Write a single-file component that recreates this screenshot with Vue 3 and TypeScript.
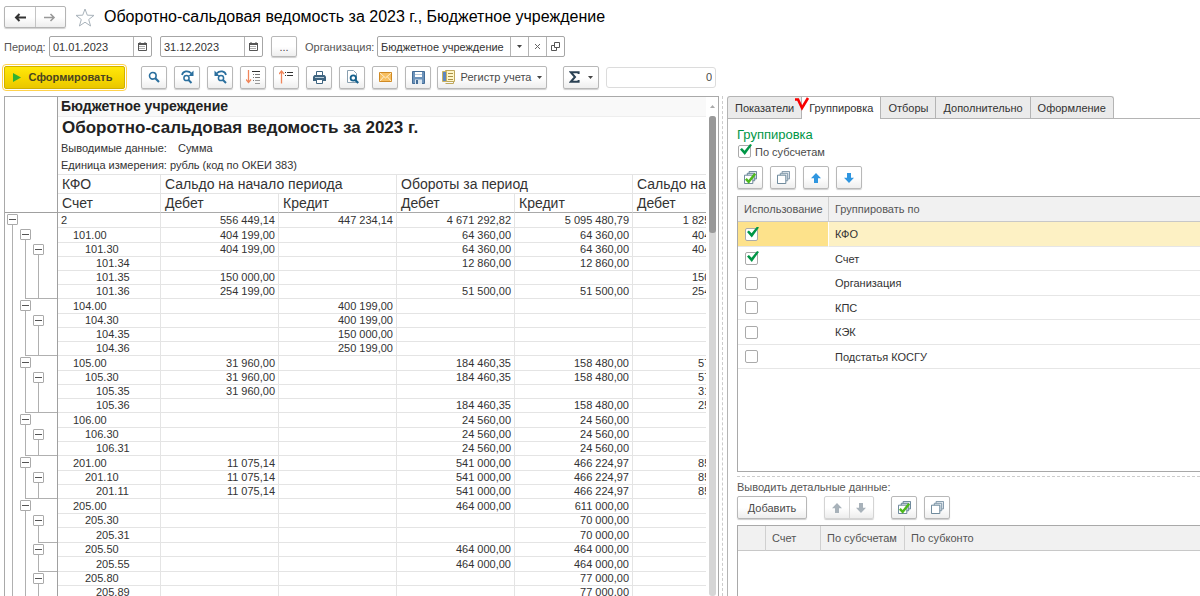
<script setup lang="ts">
import { computed, ref } from 'vue'

interface Account {
  code: string
  level: number
  cells: string[]
}

interface Grouping {
  name: string
  used: boolean
}

const account = (level: number, code: string, ...cells: string[]): Account => ({ code, level, cells })

const accounts: Account[] = [
  account(0, '2', '556 449,14', '447 234,14', '4 671 292,82', '5 095 480,79', '1 825 302,12'),
  account(1, '101.00', '404 199,00', '', '64 360,00', '64 360,00', '404 199,00'),
  account(2, '101.30', '404 199,00', '', '64 360,00', '64 360,00', '404 199,00'),
  account(3, '101.34', '', '', '12 860,00', '12 860,00', ''),
  account(3, '101.35', '150 000,00', '', '', '', '150 000,00'),
  account(3, '101.36', '254 199,00', '', '51 500,00', '51 500,00', '254 199,00'),
  account(1, '104.00', '', '400 199,00', '', '', ''),
  account(2, '104.30', '', '400 199,00', '', '', ''),
  account(3, '104.35', '', '150 000,00', '', '', ''),
  account(3, '104.36', '', '250 199,00', '', '', ''),
  account(1, '105.00', '31 960,00', '', '184 460,35', '158 480,00', '57 940,35'),
  account(2, '105.30', '31 960,00', '', '184 460,35', '158 480,00', '57 940,35'),
  account(3, '105.35', '31 960,00', '', '', '', '31 960,00'),
  account(3, '105.36', '', '', '184 460,35', '158 480,00', '25 980,35'),
  account(1, '106.00', '', '', '24 560,00', '24 560,00', ''),
  account(2, '106.30', '', '', '24 560,00', '24 560,00', ''),
  account(3, '106.31', '', '', '24 560,00', '24 560,00', ''),
  account(1, '201.00', '11 075,14', '', '541 000,00', '466 224,97', '85 850,17'),
  account(2, '201.10', '11 075,14', '', '541 000,00', '466 224,97', '85 850,17'),
  account(3, '201.11', '11 075,14', '', '541 000,00', '466 224,97', '85 850,17'),
  account(1, '205.00', '', '', '464 000,00', '611 000,00', ''),
  account(2, '205.30', '', '', '', '70 000,00', ''),
  account(3, '205.31', '', '', '', '70 000,00', ''),
  account(2, '205.50', '', '', '464 000,00', '464 000,00', ''),
  account(3, '205.55', '', '', '464 000,00', '464 000,00', ''),
  account(2, '205.80', '', '', '', '77 000,00', ''),
  account(3, '205.89', '', '', '', '77 000,00', ''),
]

// Tree lanes of one row: a box where a group opens, a line while it runs, a corner where it ends.
const rows = computed(() =>
  accounts.map((row, index) => {
    const next = accounts[index + 1]
    const lanes = [0, 1, 2].map((lane) => ({
      box: row.level === lane,
      line: row.level > lane,
      corner: row.level > lane && next !== undefined && next.level <= lane,
    }))
    const tall = row.level < 2 || (row.level === 3 && next?.level === 2)
    return { ...row, lanes, tall }
  }),
)

const tabs = ['Показатели', 'Группировка', 'Отборы', 'Дополнительно', 'Оформление']
const activeTab = ref('Группировка')

const bySubaccounts = ref(true)
const groupings = ref<Grouping[]>([
  { name: 'КФО', used: true },
  { name: 'Счет', used: true },
  { name: 'Организация', used: false },
  { name: 'КПС', used: false },
  { name: 'КЭК', used: false },
  { name: 'Подстатья КОСГУ', used: false },
])
const selected = ref('КФО')

const dateFrom = ref('01.01.2023')
const dateTo = ref('31.12.2023')
const organization = ref('Бюджетное учреждение')
const total = ref('0')

function setAll(used: boolean) {
  groupings.value.forEach((g) => (g.used = used))
}
</script>

<template>
  <div class="page">
    <svg class="defs" aria-hidden="true">
      <symbol id="i-calendar" viewBox="0 0 9 9">
        <path d="M0.5 1.5h8v7h-8z" fill="#fff" stroke="#555" />
        <path d="M0 1h9v2H0z" fill="#555" />
        <path d="M2 0v2M7 0v2" stroke="#555" />
        <path d="M1.5 4.5h6M1.5 6.5h6" stroke="#555" stroke-dasharray="1 1" />
      </symbol>
      <symbol id="i-check-all" viewBox="0 0 14 14">
        <path d="M5.5 0.5h8v8h-8z" fill="#e4ebf0" stroke="#5f7d92" />
        <path d="M3.5 2.5h8v8h-8z" fill="#e4ebf0" stroke="#5f7d92" />
        <path d="M0.5 4.5h9v9h-9z" fill="#fff" stroke="#5f7d92" />
        <path d="M2 8.5l3 3.2L12 3" fill="none" stroke="#4cb81c" stroke-width="2.6" />
      </symbol>
      <symbol id="i-clear-all" viewBox="0 0 14 14">
        <path d="M5.5 0.5h8v8h-8z" fill="#e4ebf0" stroke="#7b93a5" />
        <path d="M3.5 2.5h8v8h-8z" fill="#e4ebf0" stroke="#7b93a5" />
        <path d="M0.5 4.5h9v9h-9z" fill="#fff" stroke="#5f7d92" />
      </symbol>
      <symbol id="i-up" viewBox="0 0 10 10">
        <path d="M5 0l5 5.2H7V10H3V5.2H0z" fill="currentColor" />
      </symbol>
      <symbol id="i-down" viewBox="0 0 10 10">
        <path d="M5 10l5-5.2H7V0H3v4.8H0z" fill="currentColor" />
      </symbol>
    </svg>

    <header class="title-bar">
      <div class="pair">
        <button type="button" aria-label="Назад">
          <svg width="12" height="9" viewBox="0 0 12 9"><path d="M12 4.5H2M5.5 1L2 4.5 5.5 8" fill="none" stroke="#333" stroke-width="2" /></svg>
        </button>
        <button type="button" aria-label="Вперед">
          <svg width="12" height="9" viewBox="0 0 12 9"><path d="M0 4.5h10M6.5 1L10 4.5 6.5 8" fill="none" stroke="#999" stroke-width="1.6" /></svg>
        </button>
      </div>
      <button class="star" type="button" aria-label="Избранное">
        <svg width="20" height="19" viewBox="0 0 20 19"><path d="M10 1l2.3 6.2 6.7.2-5.300 4.100 1.900 6.500L10 14.200 4.400 18l1.900-6.500L1 7.400l6.700-.2z" fill="#fff" stroke="#a9b3bb" /></svg>
      </button>
      <h1>Оборотно-сальдовая ведомость за 2023 г., Бюджетное учреждение</h1>
    </header>

    <div class="filters">
      <label for="from">Период:</label>
      <div class="field date">
        <input id="from" v-model="dateFrom" type="text" />
        <button type="button" aria-label="Календарь"><svg width="9" height="9"><use href="#i-calendar" /></svg></button>
      </div>
      <div class="field date">
        <input v-model="dateTo" type="text" aria-label="Конец периода" />
        <button type="button" aria-label="Календарь"><svg width="9" height="9"><use href="#i-calendar" /></svg></button>
      </div>
      <button class="btn dots" type="button">...</button>
      <label for="org">Организация:</label>
      <div class="field org">
        <input id="org" v-model="organization" type="text" />
        <button type="button" aria-label="Выбрать"><svg width="5" height="3"><path d="M0 0h5L2.500 3z" fill="#444" /></svg></button>
        <button type="button" aria-label="Очистить"><svg width="5" height="5"><path d="M0 0l5 5M5 0L0 5" stroke="#666" /></svg></button>
        <button type="button" aria-label="Открыть">
          <svg width="9" height="9" viewBox="0 0 9 9"><path d="M3.500.5h5v5h-5zM3.500 3.500h-3v5h5v-3" fill="none" stroke="#555" /></svg>
        </button>
      </div>
    </div>

    <div class="toolbar">
      <button class="run" type="button">
        <svg width="8" height="9"><path d="M0 0l8 4.500L0 9z" fill="#2fb12f" /></svg>
        Сформировать
      </button>
      <div class="icons">
        <button class="btn" type="button" aria-label="Найти">
          <svg width="12" height="12" viewBox="0 0 12 12"><circle cx="4.800" cy="4.800" r="3.300" fill="none" stroke="#2a6f9e" stroke-width="1.600" /><path d="M7.300 7.300l3.700 3.700" stroke="#2a6f9e" stroke-width="2.200" /></svg>
        </button>
        <button class="btn" type="button" aria-label="Найти далее">
          <svg width="13" height="14" viewBox="0 0 13 14"><path d="M1 5C2 1 7 0 10.500 3.500" fill="none" stroke="#2a6f9e" stroke-width="1.700" /><path d="M12.500 0.500v5.500H7.500z" fill="#2a6f9e" /><circle cx="5.500" cy="8" r="2.600" fill="none" stroke="#2a6f9e" stroke-width="1.500" /><path d="M7.500 10l3 3" stroke="#2a6f9e" stroke-width="2" /></svg>
        </button>
        <button class="btn" type="button" aria-label="Найти предыдущее">
          <svg width="13" height="14" viewBox="0 0 13 14"><path d="M12 5C11 1 6 0 2.500 3.500" fill="none" stroke="#2a6f9e" stroke-width="1.700" /><path d="M0.500 0.500v5.500h5z" fill="#2a6f9e" /><circle cx="7" cy="8" r="2.600" fill="none" stroke="#2a6f9e" stroke-width="1.500" /><path d="M9 10l3 3" stroke="#2a6f9e" stroke-width="2" /></svg>
        </button>
        <button class="btn" type="button" aria-label="Развернуть">
          <svg width="14" height="14" viewBox="0 0 14 14"><path d="M2.500 0v12M0 9.500l2.500 3 2.500-3" fill="none" stroke="#f0855a" stroke-width="1.300" /><path d="M6 1.500h8" stroke="#333" /><path d="M9 4.500h5M9 7.500h5" stroke="#777" /><path d="M9 10.500h5M9 13.500h5" stroke="#999" /><path d="M7 4.500h1M7 7.500h1M7 10.500h1" stroke="#777" /></svg>
        </button>
        <button class="btn" type="button" aria-label="Свернуть">
          <svg width="14" height="14" viewBox="0 0 14 14"><path d="M2.500 13.500V1.500M0 4l2.500-3L5 4" fill="none" stroke="#f0855a" stroke-width="1.300" /><path d="M6 2.500h1M8 2.500h6M6 5.500h1M8 5.500h6" stroke="#333" /></svg>
        </button>
        <button class="btn" type="button" aria-label="Печать">
          <svg width="13" height="13" viewBox="0 0 13 13"><path d="M3.500.5h6v4h-6z" fill="#fff" stroke="#3e6480" /><path d="M1.500 4h10l1.500 1.500V10H0V5.500z" fill="#3e6480" /><path d="M2 6.500h9" stroke="#b9cddb" /><path d="M3.500 8.500h6v4h-6z" fill="#fff" stroke="#3e6480" /></svg>
        </button>
        <button class="btn" type="button" aria-label="Просмотр">
          <svg width="13" height="14" viewBox="0 0 13 14"><path d="M1.500.5h6l3 3v9h-9z" fill="#fff" stroke="#8aa0b0" /><circle cx="7.300" cy="8" r="2.700" fill="#fff" stroke="#15608c" stroke-width="1.800" /><path d="M9.200 10l3 3" stroke="#15608c" stroke-width="2.200" /></svg>
        </button>
        <button class="btn" type="button" aria-label="Отправить">
          <svg width="13" height="10" viewBox="0 0 13 10"><path d="M.5.5h12v9H.5z" fill="#f7bf62" stroke="#d08a24" /><path d="M1 1l5.500 5L12 1M1 9l3.700-4.300M12 9L8.300 4.700" fill="none" stroke="#fff0cf" /></svg>
        </button>
        <button class="btn" type="button" aria-label="Сохранить">
          <svg width="13" height="13" viewBox="0 0 13 13"><path d="M.5.5h12v12H.5z" fill="#6c93bb" stroke="#446d97" /><path d="M3 1h7v5H3z" fill="#fff" /><path d="M3 3.500h7" stroke="#b8cadb" /><path d="M3 8.500h7V13H3z" fill="#dce7f0" /><path d="M4 9h2v4H4z" fill="#446d97" /></svg>
        </button>
      </div>
      <button class="btn wide" type="button">
        <svg width="13" height="14" viewBox="0 0 13 14"><path d="M3.500.5h9v11h-9z" fill="#fff6c8" stroke="#bfa75a" /><path d="M.5 1.500h4v10h-4z" fill="#5e86c0" stroke="#ccb45e" /><path d="M6 3.500h5M6 6.500h5M6 9.500h5" stroke="#a8904a" /><path d="M3.500 13.500h8v-2" fill="none" stroke="#bfa75a" /></svg>
        <span>Регистр учета</span>
        <svg width="5" height="3"><path d="M0 0h5L2.500 3z" fill="#444" /></svg>
      </button>
      <button class="btn sum" type="button" aria-label="Сумма">
        <svg width="11" height="12" viewBox="0 0 11 12"><path d="M9.600 3V1.200H1.800L6 6l-4.200 4.800h7.800V9" fill="none" stroke="#2b4254" stroke-width="2" /></svg>
        <svg width="5" height="3"><path d="M0 0h5L2.500 3z" fill="#444" /></svg>
      </button>
      <input v-model="total" class="total" type="text" aria-label="Итог" />
    </div>

    <main class="split">
      <section class="report">
        <div class="sheet">
          <table>
            <colgroup>
              <col class="c-tree" />
              <col class="c-acc" />
              <col v-for="n in 6" :key="n" class="c-num" />
            </colgroup>
            <thead>
              <tr class="org-row"><td class="tree" rowspan="6"></td><th colspan="7">Бюджетное учреждение</th></tr>
              <tr class="name-row"><th colspan="7">Оборотно-сальдовая ведомость за 2023 г.</th></tr>
              <tr class="note-row"><td>Выводимые данные:</td><td colspan="6" class="after-note">Сумма</td></tr>
              <tr class="note-row unit"><td colspan="7">Единица измерения: рубль (код по ОКЕИ 383)</td></tr>
              <tr class="head-row">
                <th>КФО</th>
                <th colspan="2">Сальдо на начало периода</th>
                <th colspan="2">Обороты за период</th>
                <th colspan="2">Сальдо на конец периода</th>
              </tr>
              <tr class="head-row last">
                <th>Счет</th>
                <th>Дебет</th><th>Кредит</th>
                <th>Дебет</th><th>Кредит</th>
                <th>Дебет</th><th>Кредит</th>
              </tr>
            </thead>
            <tbody>
              <tr v-for="row in rows" :key="row.code" :class="['lvl-' + row.level, { tall: row.tall }]">
                <td class="tree">
                  <div class="lanes">
                    <span v-for="(lane, i) in row.lanes" :key="i" class="lane" :class="{ line: lane.line, corner: lane.corner, open: lane.box }">
                      <button v-if="lane.box" type="button" aria-label="Свернуть группу"></button>
                    </span>
                  </div>
                </td>
                <td class="acc">{{ row.code }}</td>
                <td v-for="(cell, i) in row.cells" :key="i" class="num">{{ cell }}</td>
                <td class="num"></td>
              </tr>
            </tbody>
          </table>
        </div>
        <div class="scroll">
          <svg width="5" height="3"><path d="M0 3h5L2.500 0z" fill="#aaa" /></svg>
          <div class="track"><div class="thumb"></div></div>
        </div>
      </section>

      <section class="settings">
        <nav class="tabs" role="tablist">
          <button v-for="tab in tabs" :key="tab" type="button" role="tab" :aria-selected="tab === activeTab" :class="{ active: tab === activeTab }" @click="activeTab = tab">
            {{ tab }}
            <svg v-if="tab === 'Группировка'" class="mark" width="16" height="14" viewBox="0 0 16 14"><path d="M1 2.500h3L8 11 14 1" fill="none" stroke="#f80000" stroke-width="2.600" /></svg>
          </button>
        </nav>
        <div class="pane">
          <h2>Группировка</h2>
          <label class="sub"><input v-model="bySubaccounts" type="checkbox" />По субсчетам</label>
          <div class="icons">
            <button class="btn" type="button" aria-label="Отметить все" @click="setAll(true)"><svg width="13" height="13"><use href="#i-check-all" /></svg></button>
            <button class="btn" type="button" aria-label="Снять отметки" @click="setAll(false)"><svg width="13" height="13"><use href="#i-clear-all" /></svg></button>
            <button class="btn blue" type="button" aria-label="Вверх"><svg width="10" height="10"><use href="#i-up" /></svg></button>
            <button class="btn blue" type="button" aria-label="Вниз"><svg width="10" height="10"><use href="#i-down" /></svg></button>
          </div>
          <div class="list groups">
            <table>
              <colgroup><col class="c-use" /><col /></colgroup>
              <thead><tr><th>Использование</th><th>Группировать по</th></tr></thead>
              <tbody>
                <tr v-for="g in groupings" :key="g.name" :class="{ selected: g.name === selected }" @click="selected = g.name">
                  <td><input v-model="g.used" type="checkbox" :aria-label="g.name" /></td>
                  <td>{{ g.name }}</td>
                </tr>
              </tbody>
            </table>
          </div>
          <div class="divider"></div>
          <h3>Выводить детальные данные:</h3>
          <div class="actions">
            <button class="btn add" type="button">Добавить</button>
            <div class="pair muted">
              <button type="button" aria-label="Вверх" disabled><svg width="10" height="10"><use href="#i-up" /></svg></button>
              <button type="button" aria-label="Вниз" disabled><svg width="10" height="10"><use href="#i-down" /></svg></button>
            </div>
            <div class="icons">
              <button class="btn" type="button" aria-label="Отметить все"><svg width="13" height="13"><use href="#i-check-all" /></svg></button>
              <button class="btn" type="button" aria-label="Снять отметки"><svg width="13" height="13"><use href="#i-clear-all" /></svg></button>
            </div>
          </div>
          <div class="list details">
            <table>
              <colgroup><col class="c-mark" /><col class="c-code" /><col class="c-by" /><col /></colgroup>
              <thead><tr><th></th><th>Счет</th><th>По субсчетам</th><th>По субконто</th></tr></thead>
            </table>
          </div>
        </div>
      </section>
    </main>
  </div>
</template>

<style>
body {
  margin: 0;
  background: #fff;
}
</style>

<style scoped>
* {
  box-sizing: border-box;
}

.page {
  display: flex;
  flex-direction: column;
  height: 100vh;
  overflow: hidden;
  background: #fff;
  color: #4a4a4a;
  font-family: "Liberation Sans", Arial, sans-serif;
  font-size: 11px;
}

.defs {
  position: absolute;
  width: 0;
  height: 0;
}

button,
input {
  margin: 0;
  padding: 0;
  font: inherit;
  color: inherit;
}

button {
  display: inline-flex;
  align-items: center;
  justify-content: center;
  border: 0;
  background: none;
}

svg {
  display: block;
  flex: none;
}

h1,
h2,
h3 {
  margin: 0;
  font-weight: 400;
}

.title-bar {
  display: flex;
  align-items: center;
  height: 34px;
  padding-left: 4px;
}

.title-bar h1 {
  margin-left: 9px;
  color: #000;
  font-size: 16px;
  white-space: nowrap;
}

.pair {
  display: flex;
  width: 62px;
  height: 22px;
  border: 1px solid #b4b4b4;
  border-radius: 2px;
  background: linear-gradient(#fff 50%, #ededed);
  box-shadow: 0 1px 1px #d0d0d0;
}

.pair button {
  flex: 1;
}

.pair button + button {
  border-left: 1px solid #c4c4c4;
}

.star {
  margin-left: 9px;
}

.filters {
  display: flex;
  align-items: center;
  height: 25px;
  padding-left: 4px;
}

.filters label {
  white-space: nowrap;
  color: #555;
}

.filters label[for="from"] {
  width: 45px;
}

.filters label[for="org"] {
  width: 72px;
  margin-left: 8px;
}

.field {
  display: flex;
  height: 21px;
  border: 1px solid #a6a6a6;
  border-radius: 2px;
  background: #fff;
  color: #333;
}

.field input {
  flex: 1;
  min-width: 0;
  padding-left: 3px;
  border: 0;
  background: none;
}

.field button {
  width: 18px;
  border-left: 1px solid #b4b4b4;
}

.date {
  width: 103px;
  margin-right: 8px;
}

.org {
  width: 188px;
}

.btn {
  width: 26px;
  height: 23px;
  border: 1px solid #b8b8b8;
  border-radius: 2px;
  background: linear-gradient(#fff 50%, #eee);
  box-shadow: 0 1px 1px #cfcfcf;
  color: #4a4a4a;
}

.btn.dots {
  height: 21px;
}

.toolbar {
  display: flex;
  align-items: center;
  height: 36px;
  padding-left: 4px;
}

.run {
  gap: 8px;
  width: 121px;
  height: 23px;
  padding-right: 4px;
  border: 1px solid #d0b000;
  border-radius: 2px;
  outline: 1px solid #ffd24d;
  outline-offset: 1px;
  background: linear-gradient(#ffe80a, #f5d500 60%, #e9c700);
  color: #4a4520;
  font-size: 11px;
  font-weight: 700;
}

.icons {
  display: flex;
  gap: 7px;
}

.toolbar .icons {
  margin-left: 16px;
}

.btn.wide {
  gap: 6px;
  width: 110px;
  margin-left: 6px;
}

.btn.sum {
  gap: 8px;
  width: 36px;
  margin-left: 16px;
}

.total {
  width: 110px;
  height: 21px;
  margin-left: 7px;
  padding-right: 3px;
  border: 1px solid #dcdcdc;
  border-radius: 3px;
  text-align: right;
}

.split {
  display: grid;
  flex: 1;
  grid-template-columns: minmax(0, 722fr) minmax(0, 478fr);
  min-height: 0;
  margin-top: 1px;
}

.report {
  display: flex;
  min-height: 0;
  margin: 0 3px 0 4px;
  border: 1px solid #a9a9a9;
  border-bottom: 0;
}

.sheet {
  flex: 1;
  min-width: 0;
  overflow: hidden;
}

.sheet table {
  width: 864px;
  border-collapse: separate;
  border-spacing: 0;
  table-layout: fixed;
}

.c-tree {
  width: 53px;
}

.c-acc {
  width: 103px;
}

.c-num {
  width: 118px;
}

.sheet th,
.sheet td {
  padding: 0 3px;
  color: #333;
  font-weight: 400;
  text-align: left;
  white-space: nowrap;
}

.sheet .tree {
  padding: 0;
  border-right: 1px solid #a0a0a0;
}

.sheet thead .tree {
  border-bottom: 1px solid #a0a0a0;
}

.org-row th {
  height: 20px;
  border-bottom: 1px solid #eee;
  background: #f9f9f9;
}

.sheet .org-row th {
  color: #222;
  font-size: 14px;
  font-weight: 700;
  line-height: 19px;
}

.sheet .name-row th {
  height: 22px;
  padding-left: 4px;
  color: #222;
  font-size: 17px;
  font-weight: 700;
  line-height: 20px;
}

.note-row td {
  height: 17px;
}

.note-row.unit td {
  height: 18px;
  padding-bottom: 1px;
}

.sheet .after-note {
  padding-left: 17px;
}

.sheet .head-row th {
  height: 19px;
  padding-left: 4px;
  border-top: 1px solid #e4e4e4;
  border-right: 1px solid #e4e4e4;
  font-size: 14px;
  line-height: 18px;
}

.sheet .head-row.last th {
  height: 20px;
  border-bottom: 1px solid #a9a9a9;
}

.sheet tbody td {
  height: 14px;
  line-height: 13px;
}

.sheet tbody .tall td {
  height: 15px;
}

.sheet tbody .acc,
.sheet tbody .num {
  border-right: 1px solid #e4e4e4;
  border-bottom: 1px solid #e4e4e4;
}

.sheet .num {
  text-align: right;
}

.sheet .lvl-1 .acc {
  padding-left: 15px;
}

.sheet .lvl-2 .acc {
  padding-left: 27px;
}

.sheet .lvl-3 .acc {
  padding-left: 38px;
}

.lanes {
  display: flex;
  height: 14px;
  padding-left: 1px;
  overflow: hidden;
}

.tall .lanes {
  height: 15px;
}

.lane {
  position: relative;
  flex: 0 0 13px;
}

.lane.line::before,
.lane.open::before {
  position: absolute;
  top: 0;
  bottom: 0;
  left: 6px;
  width: 1px;
  background: #b0b0b0;
  content: "";
}

.lane.open::before {
  top: 12px;
}

.lane.corner::after {
  position: absolute;
  right: -60px;
  bottom: 0;
  left: 6px;
  height: 1px;
  background: #b0b0b0;
  content: "";
}

.lane button {
  display: flex;
  width: 11px;
  height: 11px;
  margin: 1px;
  border: 1px solid #aaa;
  border-radius: 1px;
  background: #fff;
}

.lane button::before {
  width: 7px;
  height: 1px;
  background: #555;
  content: "";
}

.scroll {
  display: flex;
  flex: 0 0 12px;
  flex-direction: column;
  align-items: center;
  gap: 8px;
  padding-top: 8px;
}

.track {
  flex: 1;
  width: 7px;
  border-radius: 3px;
  background: #d6d6d6;
}

.thumb {
  height: 117px;
  border-radius: 3px;
  background: #999;
}

.settings {
  display: flex;
  flex-direction: column;
  min-height: 0;
  padding-left: 4px;
  border-left: 1px dashed #ccc;
}

.tabs {
  display: flex;
  flex: none;
  height: 23px;
  border-bottom: 1px solid #b4b4b4;
}

.tabs button {
  position: relative;
  height: 22px;
  padding: 0 7px;
  border: 1px solid #b4b4b4;
  border-width: 1px 1px 0 0;
  background: #ebebeb;
  color: #333;
}

.tabs button:first-child {
  border-left-width: 1px;
  border-top-left-radius: 3px;
}

.tabs button:last-child {
  border-top-right-radius: 3px;
}

.tabs button.active {
  height: 23px;
  background: #fff;
}

.mark {
  position: absolute;
  top: 0;
  left: -8px;
}

.pane {
  display: flex;
  flex: 1;
  flex-direction: column;
  min-height: 0;
  padding: 7px 0 0 9px;
  border-left: 1px solid #b4b4b4;
}

.pane h2 {
  color: #009646;
  font-size: 13px;
  line-height: 17px;
}

.sub {
  display: flex;
  align-items: center;
  gap: 4px;
  height: 17px;
  padding-left: 1px;
}

input[type="checkbox"] {
  position: relative;
  display: block;
  width: 13px;
  height: 13px;
  border: 1px solid #aaa;
  border-radius: 2px;
  background: #fff;
  appearance: none;
}

input[type="checkbox"]:checked::after {
  position: absolute;
  top: -2px;
  left: 1px;
  width: 12px;
  height: 11px;
  background: #009646;
  clip-path: polygon(0 50%, 16% 36%, 38% 62%, 84% 0, 100% 8%, 40% 100%);
  content: "";
}

.pane > .icons {
  margin-top: 6px;
}

.blue {
  color: #2f96e0;
}

.list {
  border: 1px solid #a9a9a9;
  border-right: 0;
}

.list table {
  width: 100%;
  border-collapse: separate;
  border-spacing: 0;
  table-layout: fixed;
}

.c-use {
  width: 91px;
}

.c-mark {
  width: 28px;
}

.c-code {
  width: 55px;
}

.c-by {
  width: 84px;
}

.list th {
  height: 25px;
  padding: 0 0 0 6px;
  border-right: 1px solid #d0d0d0;
  border-bottom: 1px solid #c8c8c8;
  background: #f1f1f1;
  color: #555;
  font-weight: 400;
  text-align: left;
  white-space: nowrap;
}

.list th:last-child {
  border-right: 0;
}

.list td {
  height: 24px;
  padding: 0 6px;
  border-bottom: 1px solid #e6e6e6;
  color: #333;
}

.list td:first-child {
  padding-left: 7px;
}

.list tr:nth-child(odd) td {
  height: 25px;
}

.list .selected td {
  background: #fdf1c4;
}

.list .selected td:first-child {
  border-right: 1px solid #fff;
  background: #fde28b;
}

.groups {
  height: 276px;
  margin-top: 7px;
}

.divider {
  margin-top: 4px;
  border-top: 1px dashed #ccc;
}

.pane h3 {
  margin-top: 2px;
  color: #555;
  font-size: 11px;
  line-height: 16px;
}

.actions {
  display: flex;
  margin-top: 1px;
}

.btn.add {
  width: 70px;
}

.muted {
  width: 50px;
  height: 23px;
  margin: 0 17px;
  border-color: #d4d4d4;
  color: #a8b2ba;
}

.muted button + button {
  border-color: #d4d4d4;
}

.details {
  flex: 1;
  min-height: 0;
  margin-top: 6px;
  border-bottom: 0;
}
</style>
